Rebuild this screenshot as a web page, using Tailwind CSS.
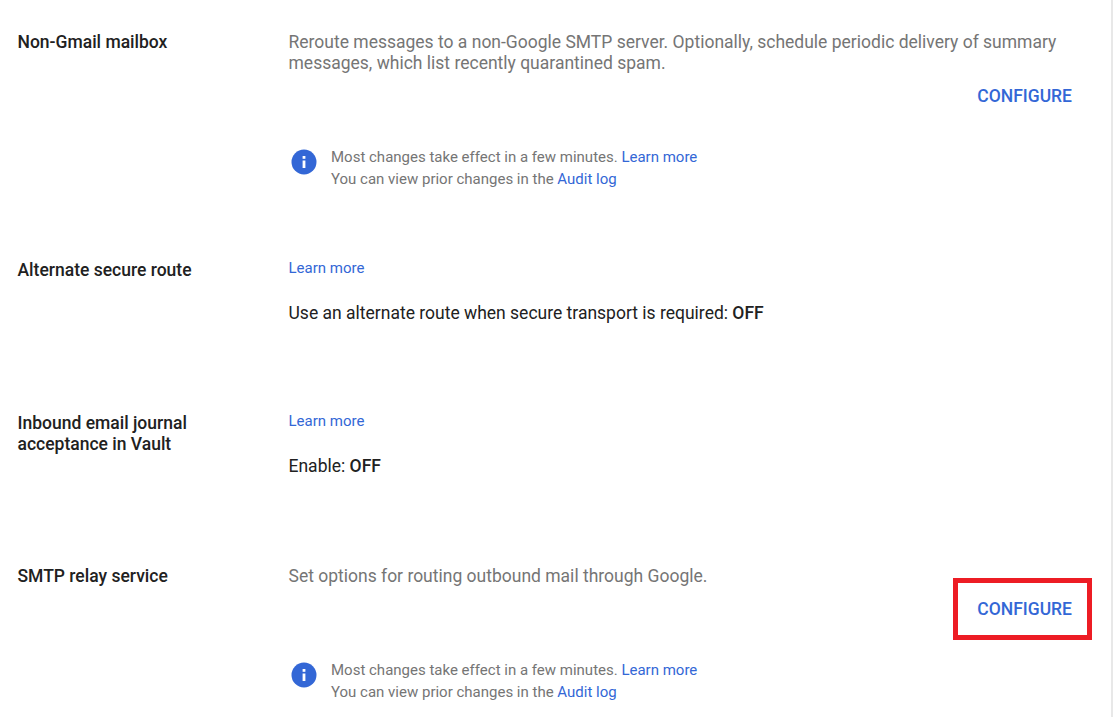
<!doctype html>
<html lang="en">
  <head>
    <meta charset="UTF-8" />
    <title>Email settings</title>
    <script src="https://cdn.jsdelivr.net/npm/@tailwindcss/browser@4"></script>
  </head>
  <body class="bg-white font-['Roboto',sans-serif] overflow-hidden">
    <div class="w-[1113px] h-[717px] border-r-2 border-[#e8e8e8] overflow-hidden pt-[32px] pl-[17.5px] text-[17.5px] leading-[21px]">
      <!-- Non-Gmail mailbox -->
      <section class="flex h-[228px]">
        <h3 class="w-[271px] shrink-0 font-medium text-[#212121]">Non-Gmail mailbox</h3>
        <div class="w-[783.5px]">
          <p class="text-[#757575]">Reroute messages to a non-Google SMTP server. Optionally, schedule periodic delivery of summary messages, which list recently quarantined spam.</p>
          <div class="flex justify-end mt-[12px]">
            <a class="font-medium text-[#3367d6]">CONFIGURE</a>
          </div>
          <div class="flex mt-[39px] pl-[2px]">
            <svg class="w-[26px] h-[26px] mt-[3px] shrink-0" viewBox="0 0 26 26">
              <circle cx="13" cy="13" r="12.5" fill="#3367d6" />
              <rect x="11.6" y="11.5" width="2.8" height="7.5" fill="#fff" />
              <rect x="11.6" y="7" width="2.8" height="2.8" fill="#fff" />
            </svg>
            <p class="ml-[14.5px] text-[15px] leading-[22px] text-[#757575]">
              Most changes take effect in a few minutes. <a class="text-[#3367d6]">Learn more</a><br />
              You can view prior changes in the <a class="text-[#3367d6]">Audit log</a>
            </p>
          </div>
        </div>
      </section>

      <!-- Alternate secure route -->
      <section class="flex h-[153px]">
        <h3 class="w-[271px] shrink-0 font-medium text-[#212121]">Alternate secure route</h3>
        <div class="-mt-[2px]">
          <a class="block text-[15px] text-[#3367d6]">Learn more</a>
          <p class="mt-[24px] text-[#212121]">Use an alternate route when secure transport is required: <span class="font-medium">OFF</span></p>
        </div>
      </section>

      <!-- Inbound email journal -->
      <section class="flex h-[153px]">
        <h3 class="w-[271px] shrink-0 font-medium text-[#212121]">Inbound email journal<br />acceptance in Vault</h3>
        <div class="-mt-[2px]">
          <a class="block text-[15px] text-[#3367d6]">Learn more</a>
          <p class="mt-[24px] text-[#212121]">Enable: <span class="font-medium">OFF</span></p>
        </div>
      </section>

      <!-- SMTP relay service -->
      <section class="flex">
        <h3 class="w-[271px] shrink-0 font-medium text-[#212121]">SMTP relay service</h3>
        <div class="w-[783.5px]">
          <p class="text-[#757575]">Set options for routing outbound mail through Google.</p>
          <div class="flex justify-end mt-[12px] relative">
            <a class="font-medium text-[#3367d6]">CONFIGURE</a>
            <div class="absolute right-[-20px] top-[-21px] w-[139px] h-[62px] border-[5px] border-[#ed1c24]"></div>
          </div>
          <div class="flex mt-[39px] pl-[2px]">
            <svg class="w-[26px] h-[26px] mt-[3px] shrink-0" viewBox="0 0 26 26">
              <circle cx="13" cy="13" r="12.5" fill="#3367d6" />
              <rect x="11.6" y="11.5" width="2.8" height="7.5" fill="#fff" />
              <rect x="11.6" y="7" width="2.8" height="2.8" fill="#fff" />
            </svg>
            <p class="ml-[14.5px] text-[15px] leading-[22px] text-[#757575]">
              Most changes take effect in a few minutes. <a class="text-[#3367d6]">Learn more</a><br />
              You can view prior changes in the <a class="text-[#3367d6]">Audit log</a>
            </p>
          </div>
        </div>
      </section>
    </div>
  </body>
</html>
